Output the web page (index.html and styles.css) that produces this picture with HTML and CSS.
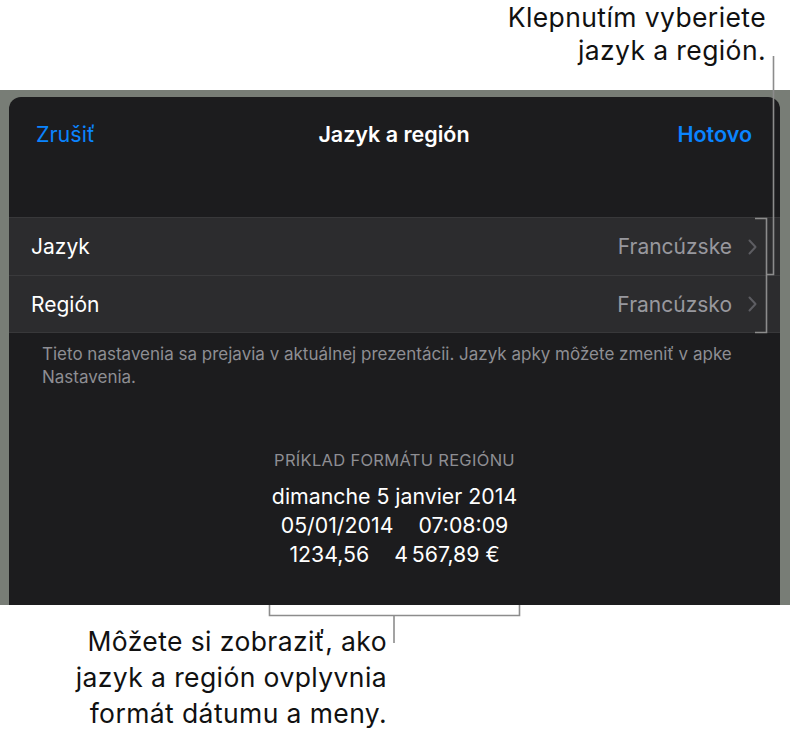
FILE: index.html
```html
<!DOCTYPE html>
<html lang="sk">
<head>
<meta charset="utf-8">
<title>Jazyk a región</title>
<link rel="stylesheet" href="styles.css">
</head>
<body>
<div class="page">
  <div class="callout-top">
    <p>Klepnutím vyberiete<br>jazyk a región.</p>
  </div>
  <div class="backdrop">
    <div class="sheet">
      <div class="nav">
        <span class="cancel">Zrušiť</span>
        <span class="title">Jazyk a región</span>
        <span class="done">Hotovo</span>
      </div>
      <div class="group">
        <div class="row">
          <span class="label">Jazyk</span>
          <span class="value">Francúzske</span>
          <svg class="chev" width="9" height="16" viewBox="0 0 9 16"><polyline points="1.5,1.5 7.5,8 1.5,14.5" fill="none" stroke="#5d5d62" stroke-width="2" stroke-linecap="round" stroke-linejoin="round"/></svg>
        </div>
        <div class="row">
          <span class="label">Región</span>
          <span class="value">Francúzsko</span>
          <svg class="chev" width="9" height="16" viewBox="0 0 9 16"><polyline points="1.5,1.5 7.5,8 1.5,14.5" fill="none" stroke="#5d5d62" stroke-width="2" stroke-linecap="round" stroke-linejoin="round"/></svg>
        </div>
      </div>
      <p class="note">Tieto nastavenia sa prejavia v aktuálnej prezentácii. Jazyk apky môžete zmeniť v apke Nastavenia.</p>
      <div class="sample">
        <div class="sample-label">PRÍKLAD FORMÁTU REGIÓNU</div>
        <div class="sample-line">dimanche 5 janvier 2014</div>
        <div class="sample-line"><span>05/01/2014</span><span>07:08:09</span></div>
        <div class="sample-line"><span>1234,56</span><span>4&#8239;567,89 €</span></div>
      </div>
    </div>
  </div>
  <div class="callout-bottom">
    <p>Môžete si zobraziť, ako<br>jazyk a región ovplyvnia<br>formát dátumu a meny.</p>
  </div>
  <svg class="leaders" width="790" height="739" viewBox="0 0 790 739">
    <g fill="none" stroke="#8c8c8c" stroke-width="1.6">
      <path d="M773.5 56 V274.5 H766.5"/>
      <path d="M755 218.5 H766.5 V332.5 H755"/>
      <path d="M269.5 605 V615.5 H519.5 V605"/>
      <path d="M394 615.5 V643"/>
    </g>
  </svg>
</div>
</body>
</html>
```
FILE: styles.css
```css
* { box-sizing: border-box; }
html, body { margin: 0; padding: 0; background: #ffffff; }
body { font-family: Inter, "Noto Sans", "Liberation Sans", sans-serif; }

.page {
  position: relative;
  width: 790px;
  height: 739px;
  overflow: hidden;
}

.callout-top {
  height: 90px;
  padding: 1px 24px 0 0;
  display: flex;
  justify-content: flex-end;
}
.callout-top p, .callout-bottom p {
  margin: 0;
  text-align: right;
  color: #111111;
  font-size: 26.5px;
  letter-spacing: 0.4px;
  line-height: 33px;
  font-weight: 400;
}

.backdrop {
  height: 515px;
  background: #787d76;
  padding: 7px 10px 0 9px;
}

.sheet {
  height: 508px;
  background: #1c1c1e;
  border-radius: 12px 12px 0 0;
  color: #ffffff;
  display: flex;
  flex-direction: column;
}

.nav {
  height: 120px;
  display: grid;
  grid-template-columns: 1fr auto 1fr;
  align-items: start;
  padding: 25px 28px 0 27px;
  font-size: 21.5px;
  line-height: 25px;
}
.cancel { color: #0a84ff; justify-self: start; }
.title { font-weight: 600; color: #ffffff; }
.done { color: #0a84ff; font-weight: 600; justify-self: end; }

.group {
  background: #2c2c2e;
  border-top: 1px solid #38383a;
  border-bottom: 1px solid #38383a;
}
.row {
  height: 57px;
  display: flex;
  align-items: center;
  padding: 0 23px 0 22px;
  font-size: 21px;
}
.row + .row {
  border-top: 1px solid #3a3a3c;
}
.label { flex: 1; color: #ffffff; }
.value { color: #98989e; margin-right: 16px; }
.chev { display: block; }

.note {
  margin: 0;
  padding: 10px 30px 0 33px;
  font-size: 17px;
  line-height: 23px;
  color: #8e8e93;
}

.sample {
  margin-top: 61px;
  display: flex;
  flex-direction: column;
  align-items: center;
}
.sample-label {
  font-size: 16.5px;
  line-height: 20px;
  color: #8e8e93;
  letter-spacing: 0.3px;
  margin-bottom: 12px;
}
.sample-line {
  font-size: 21.3px;
  line-height: 29px;
  color: #ffffff;
  display: flex;
  gap: 25px;
}

.callout-bottom {
  width: 387px;
  padding-top: 18px;
  display: flex;
  justify-content: flex-end;
}
.callout-bottom p { line-height: 36px; }

.leaders {
  position: absolute;
  top: 0;
  left: 0;
  pointer-events: none;
}
```
